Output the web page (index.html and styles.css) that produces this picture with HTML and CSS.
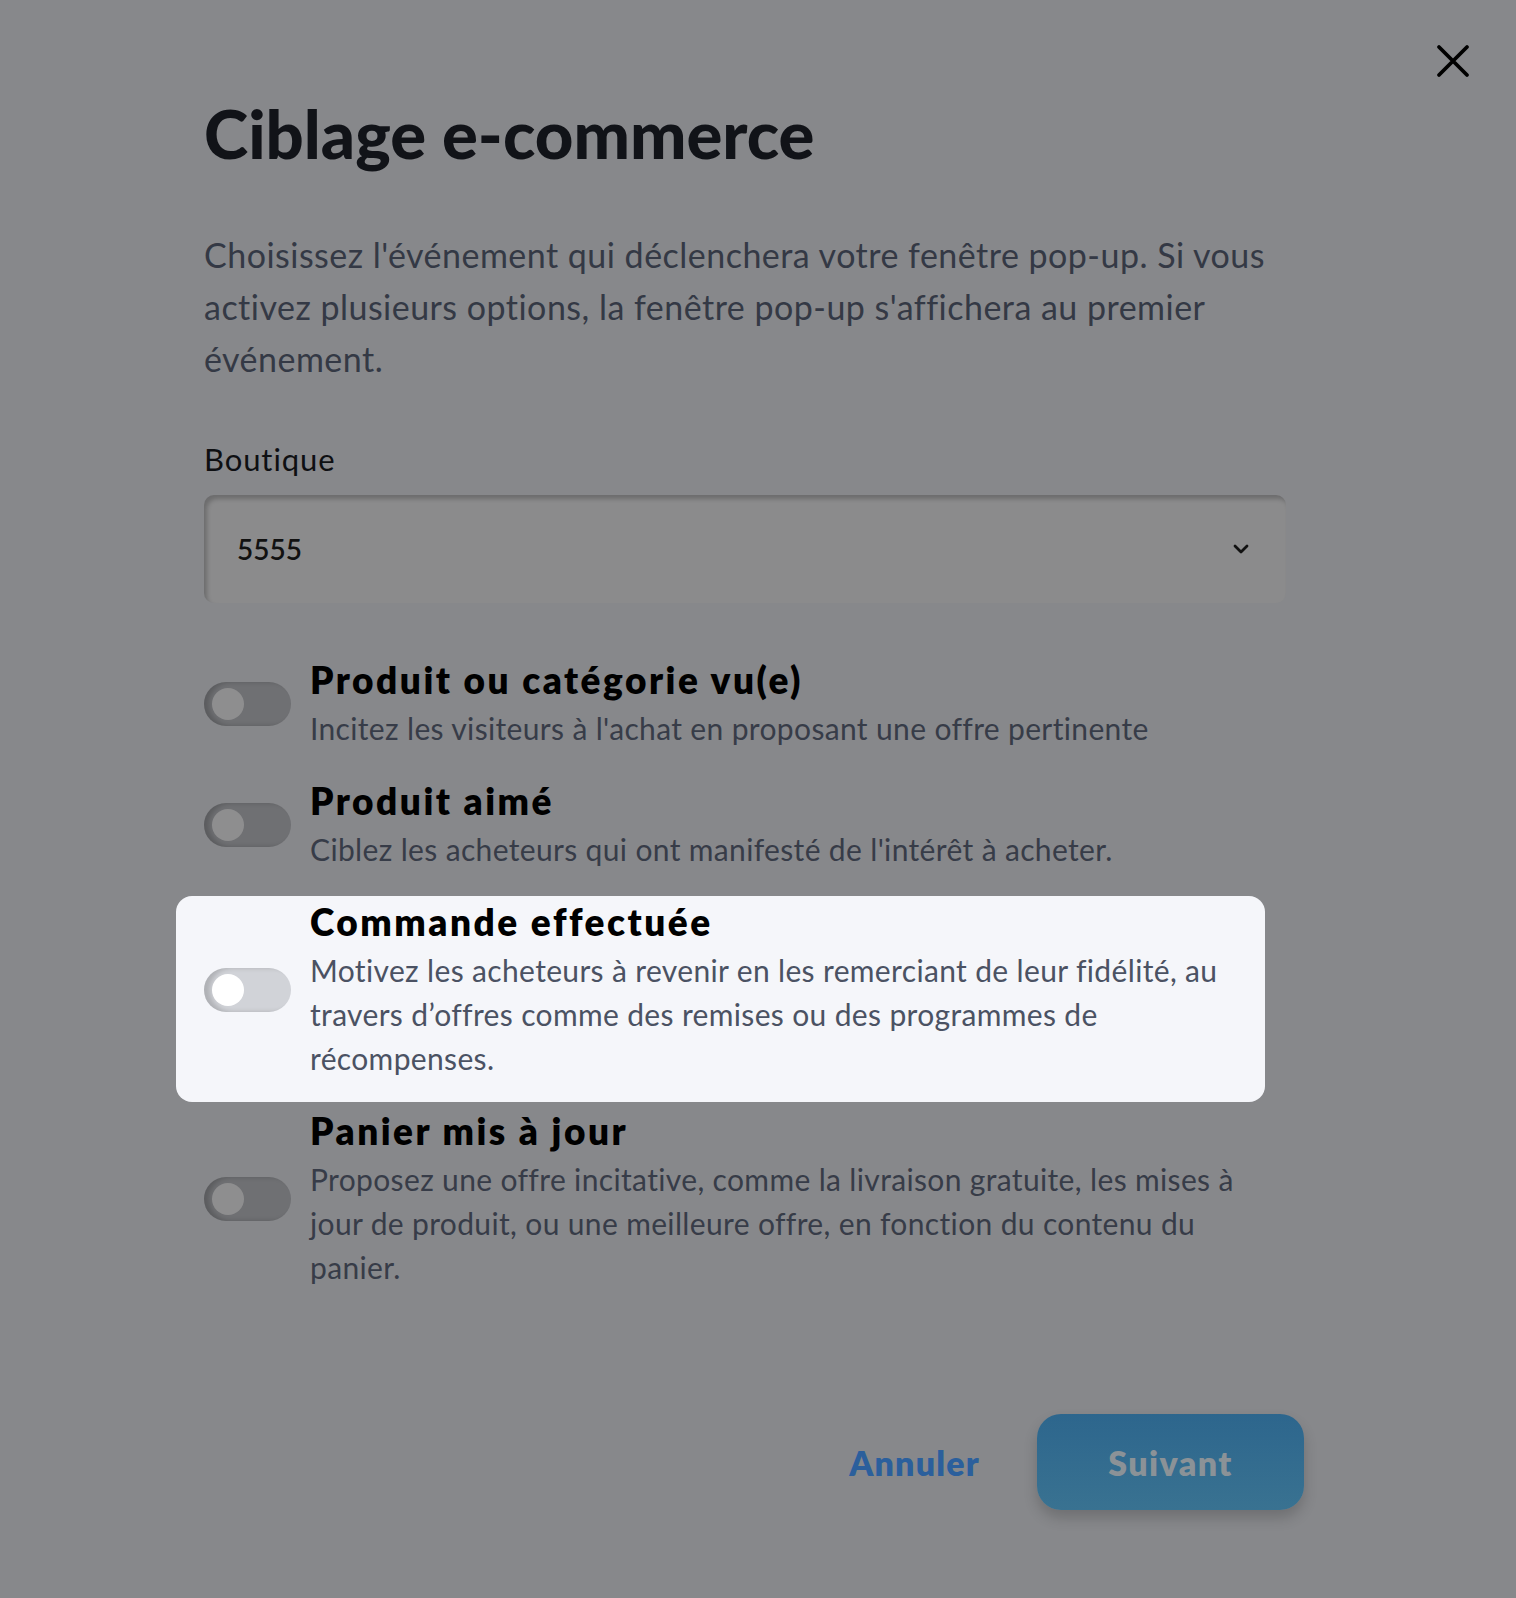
FILE: index.html
```html
<!DOCTYPE html>
<html lang="fr">
<head>
<meta charset="utf-8">
<title>Ciblage e-commerce</title>
<link rel="stylesheet" href="styles.css">
</head>
<body>
<div class="modal">
  <div class="topbar">
    <button class="close" aria-label="Fermer">
      <svg width="34" height="34" viewBox="0 0 34 34"><path d="M3 3 L31 31 M31 3 L3 31" stroke="#000" stroke-width="3.8" stroke-linecap="round" fill="none"/></svg>
    </button>
  </div>
  <div class="content">
    <h1 class="title">Ciblage e-commerce</h1>
    <p class="intro">Choisissez l'événement qui déclenchera votre fenêtre pop-up. Si vous activez plusieurs options, la fenêtre pop-up s'affichera au premier événement.</p>
    <div class="field">
      <label class="label">Boutique</label>
      <div class="select">
        <span class="select-value">5555</span>
        <svg class="chevron" width="18" height="12" viewBox="0 0 18 12"><path d="M3 3 L9 9 L15 3" stroke="#111" stroke-width="2.8" fill="none" stroke-linecap="round" stroke-linejoin="round"/></svg>
      </div>
    </div>
    <div class="options">
      <div class="option">
        <span class="toggle"><span class="knob"></span></span>
        <div class="option-text">
          <div class="option-title">Produit ou catégorie vu(e)</div>
          <div class="option-desc">Incitez les visiteurs à l'achat en proposant une offre pertinente</div>
        </div>
      </div>
      <div class="option">
        <span class="toggle"><span class="knob"></span></span>
        <div class="option-text">
          <div class="option-title">Produit aimé</div>
          <div class="option-desc">Ciblez les acheteurs qui ont manifesté de l'intérêt à acheter.</div>
        </div>
      </div>
      <div class="option option-active">
        <span class="toggle"><span class="knob"></span></span>
        <div class="option-text">
          <div class="option-title">Commande effectuée</div>
          <div class="option-desc">Motivez les acheteurs à revenir en les remerciant de leur fidélité, au travers d’offres comme des remises ou des programmes de récompenses.</div>
        </div>
      </div>
      <div class="option">
        <span class="toggle"><span class="knob"></span></span>
        <div class="option-text">
          <div class="option-title">Panier mis à jour</div>
          <div class="option-desc">Proposez une offre incitative, comme la livraison gratuite, les mises à jour de produit, ou une meilleure offre, en fonction du contenu du panier.</div>
        </div>
      </div>
    </div>
  </div>
  <div class="footer">
    <button class="btn-cancel">Annuler</button>
    <button class="btn-next">Suivant</button>
  </div>
</div>
</body>
</html>
```

FILE: styles.css
```css
html, body {
  margin: 0;
  padding: 0;
}
body {
  background: #87888b;
  font-family: "Lato", "Liberation Sans", sans-serif;
  width: 1516px;
  height: 1598px;
  overflow: hidden;
}
.modal {
  display: flex;
  flex-direction: column;
  padding-top: 44px;
}
.topbar {
  display: flex;
  justify-content: flex-end;
  padding-right: 46px;
  height: 34px;
}
.close {
  border: 0;
  background: none;
  padding: 0;
  width: 34px;
  height: 34px;
  cursor: pointer;
}
.close svg { display: block; }
.content {
  margin-left: 204px;
  width: 1082px;
}
.title {
  margin: 15px 0 0 0;
  font-size: 67px;
  line-height: 80px;
  font-weight: 900;
  color: #111318;
  letter-spacing: 0;
}
.intro {
  margin: 56px 0 0 0;
  font-size: 34px;
  line-height: 52px;
  letter-spacing: 0.48px;
  color: #343945;
}
.field {
  margin-top: 54px;
}
.label {
  display: block;
  font-size: 31px;
  line-height: 40px;
  letter-spacing: 0.9px;
  color: #0e0f12;
}
.select {
  margin-top: 16px;
  height: 108px;
  box-sizing: border-box;
  background: #8b8b8c;
  border-radius: 10px;
  box-shadow: inset 3px 4px 4px rgba(0, 0, 0, 0.22);
  display: flex;
  align-items: center;
  justify-content: space-between;
  padding: 0 36px 0 33px;
}
.select-value {
  font-size: 28px;
  font-weight: 600;
  color: #111;
}
.chevron { display: block; }
.options {
  margin-top: 54px;
  margin-right: 21px;
  display: flex;
  flex-direction: column;
  gap: 28px;
}
.option {
  display: flex;
  align-items: center;
  gap: 19px;
}
.option-active {
  background: #f5f6fa;
  border-radius: 16px;
  margin: -3px 0 -22px -28px;
  padding: 3px 0 22px 28px;
  position: relative;
}
.toggle {
  flex: none;
  width: 87px;
  height: 44px;
  border-radius: 22px;
  background: #6f7073;
  box-shadow: inset 5px 0 5px rgba(0, 0, 0, 0.18);
  display: flex;
  align-items: center;
  padding-left: 8px;
  box-sizing: border-box;
}
.knob {
  width: 32px;
  height: 32px;
  border-radius: 50%;
  background: #8e8e8f;
}
.option-active .toggle {
  background: #d1d3d8;
  box-shadow: inset 6px 0 5px rgba(0, 0, 0, 0.16);
}
.option-active .knob {
  background: #ffffff;
}
.option-text {
  flex: 1;
  min-width: 0;
}
.option-title {
  font-size: 37px;
  line-height: 46px;
  font-weight: 800;
  color: #000;
  letter-spacing: 2.5px;
  margin-bottom: 3px;
}
.option-desc {
  font-size: 30px;
  line-height: 44px;
  letter-spacing: 0.35px;
  color: #373c48;
}
.option-active .option-desc {
  color: #4b5263;
}
.footer {
  display: flex;
  justify-content: flex-end;
  align-items: center;
  gap: 57px;
  padding-right: 212px;
  margin-top: 125px;
}
.btn-cancel {
  border: 0;
  background: none;
  padding: 0;
  font-family: inherit;
  font-size: 34px;
  font-weight: 800;
  letter-spacing: 1.2px;
  color: #2b5f9c;
}
.btn-next {
  border: 0;
  width: 267px;
  height: 96px;
  border-radius: 24px;
  background: linear-gradient(#2d668d, #397291);
  box-shadow: 0 8px 14px rgba(0, 0, 0, 0.18);
  font-family: inherit;
  font-size: 34px;
  font-weight: 800;
  letter-spacing: 1.4px;
  color: #8b9297;
}
```
